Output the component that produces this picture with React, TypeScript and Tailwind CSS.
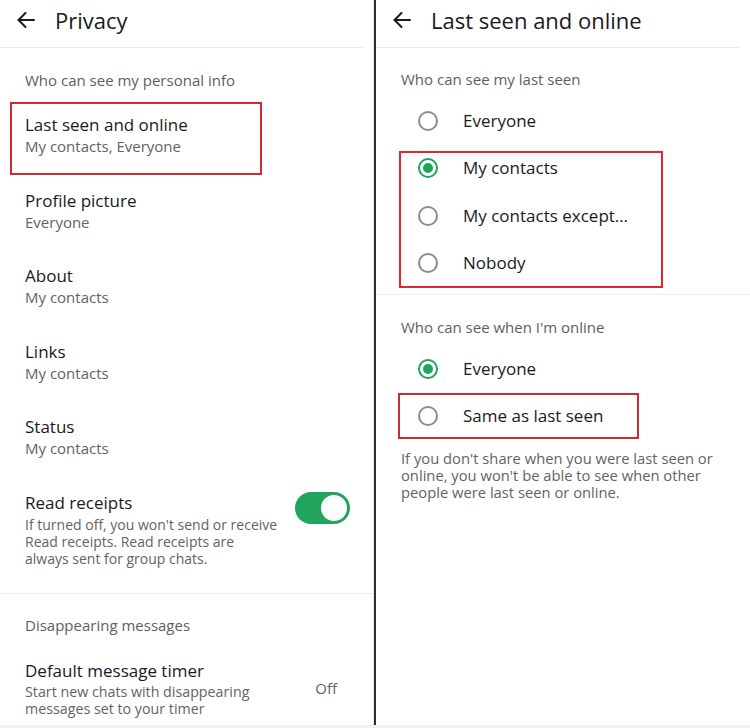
import React from "react";

const font = { fontFamily: "'Open Sans', 'Noto Sans', sans-serif" };

function BackArrow() {
  return (
    <svg width="20" height="20" viewBox="0 0 20 20" fill="none" stroke="#1a1a1a" strokeWidth="2" strokeLinecap="round" strokeLinejoin="round">
      <path d="M18 10H2.5" />
      <path d="M9.5 3L2.5 10L9.5 17" />
    </svg>
  );
}

function Header({ title }: { title: string }) {
  return (
    <div className="flex h-[48px] items-center pb-[8px] border-b border-[#ececec] mr-[10px]">
      <div className="ml-[16px] w-[20px] flex items-center">
        <BackArrow />
      </div>
      <div className="ml-[19px] text-[22px] text-[#1a1a1a] leading-[28px]">{title}</div>
    </div>
  );
}

function SectionLabel({ children, pl }: { children: React.ReactNode; pl: string }) {
  return <div className={`${pl} text-[15px] leading-[20px] text-[#5e5e5e]`}>{children}</div>;
}

function Item({ title, sub, boxed }: { title: string; sub: string; boxed?: boolean }) {
  return (
    <div className="relative pl-[25px] pt-[16px] pb-[16.5px]">
      <div className="text-[17px] leading-[22px] text-[#1a1a1a]">{title}</div>
      <div className="text-[15px] leading-[21px] text-[#636363]">{sub}</div>
      {boxed && (
        <div className="absolute left-[10px] top-[4px] w-[252px] h-[73px] border-2 border-[#cf2b37]" />
      )}
    </div>
  );
}

function Radio({ on }: { on?: boolean }) {
  return on ? (
    <div className="w-[20px] h-[20px] rounded-full border-2 border-[#1fa55b] flex items-center justify-center">
      <div className="w-[10px] h-[10px] rounded-full bg-[#1fa55b]" />
    </div>
  ) : (
    <div className="w-[20px] h-[20px] rounded-full border-2 border-[#8c8c8c]" />
  );
}

function RadioRow({ label, on }: { label: string; on?: boolean }) {
  return (
    <div className="h-[47.5px] flex items-center pl-[42px]">
      <Radio on={on} />
      <div className="ml-[25px] text-[17px] text-[#1a1a1a] leading-[22px]">{label}</div>
    </div>
  );
}

export default function App() {
  return (
    <div className="w-[750px] h-[728px] bg-white flex flex-col overflow-hidden" style={font}>
      <div className="flex h-[725px]">
        {/* Left panel */}
        <div className="w-[374px] border-r border-[#e6e6e6] flex flex-col">
          <Header title="Privacy" />
          <div className="pt-[22px]">
            <SectionLabel pl="pl-[25px]">Who can see my personal info</SectionLabel>
          </div>
          <div className="mt-[8px]">
            <Item title="Last seen and online" sub="My contacts, Everyone" boxed />
            <Item title="Profile picture" sub="Everyone" />
            <Item title="About" sub="My contacts" />
            <Item title="Links" sub="My contacts" />
            <Item title="Status" sub="My contacts" />
            <div className="flex items-start pl-[25px] pr-[23px] pt-[16px] pb-[26px]">
              <div className="flex-1">
                <div className="text-[17px] leading-[22px] text-[#1a1a1a]">Read receipts</div>
                <div className="mt-[2px] text-[14px] leading-[17px] text-[#636363] whitespace-nowrap">
                  If turned off, you won't send or receive
                  <br />
                  Read receipts. Read receipts are
                  <br />
                  always sent for group chats.
                </div>
              </div>
              <div className="w-[55px] h-[32px] rounded-full bg-[#21a45c] flex items-center justify-end pr-[3px]">
                <div className="w-[26px] h-[26px] rounded-full bg-white" />
              </div>
            </div>
          </div>
          <div className="border-t border-[#ececec] pt-[21px]">
            <SectionLabel pl="pl-[25px]">Disappearing messages</SectionLabel>
          </div>
          <div className="flex items-center pl-[25px] pr-[36px] mt-[25px]">
            <div className="flex-1">
              <div className="text-[17px] leading-[22px] text-[#1a1a1a]">Default message timer</div>
              <div className="mt-[1px] text-[14.25px] leading-[17px] text-[#636363] whitespace-nowrap">
                Start new chats with disappearing
                <br />
                messages set to your timer
              </div>
            </div>
            <div className="text-[15px] text-[#636363]">Off</div>
          </div>
        </div>
        {/* Divider */}
        <div className="w-[2px] bg-[#2e2e2e]" />
        {/* Right panel */}
        <div className="flex-1 flex flex-col">
          <Header title="Last seen and online" />
          <div className="pt-[21px]">
            <SectionLabel pl="pl-[25px]">Who can see my last seen</SectionLabel>
          </div>
          <div className="relative mt-[8px]">
            <RadioRow label="Everyone" />
            <RadioRow label="My contacts" on />
            <RadioRow label="My contacts except…" />
            <RadioRow label="Nobody" />
            <div className="absolute left-[23px] top-[54px] w-[264px] h-[137px] border-2 border-[#dc2630]" />
          </div>
          <div className="mt-[7px] border-t border-[#ececec] pt-[22px]">
            <SectionLabel pl="pl-[25px]">Who can see when I'm online</SectionLabel>
          </div>
          <div className="relative mt-[8px]">
            <RadioRow label="Everyone" on />
            <RadioRow label="Same as last seen" />
            <div className="absolute left-[22px] top-[48px] w-[241px] h-[46px] border-2 border-[#cf2b37]" />
          </div>
          <div className="mt-[10px] pl-[25px] text-[14.75px] leading-[17px] text-[#636363] whitespace-nowrap">
            If you don't share when you were last seen or
            <br />
            online, you won't be able to see when other
            <br />
            people were last seen or online.
          </div>
        </div>
      </div>
      <div className="h-[3px] bg-[#f1f1f1]" />
    </div>
  );
}
